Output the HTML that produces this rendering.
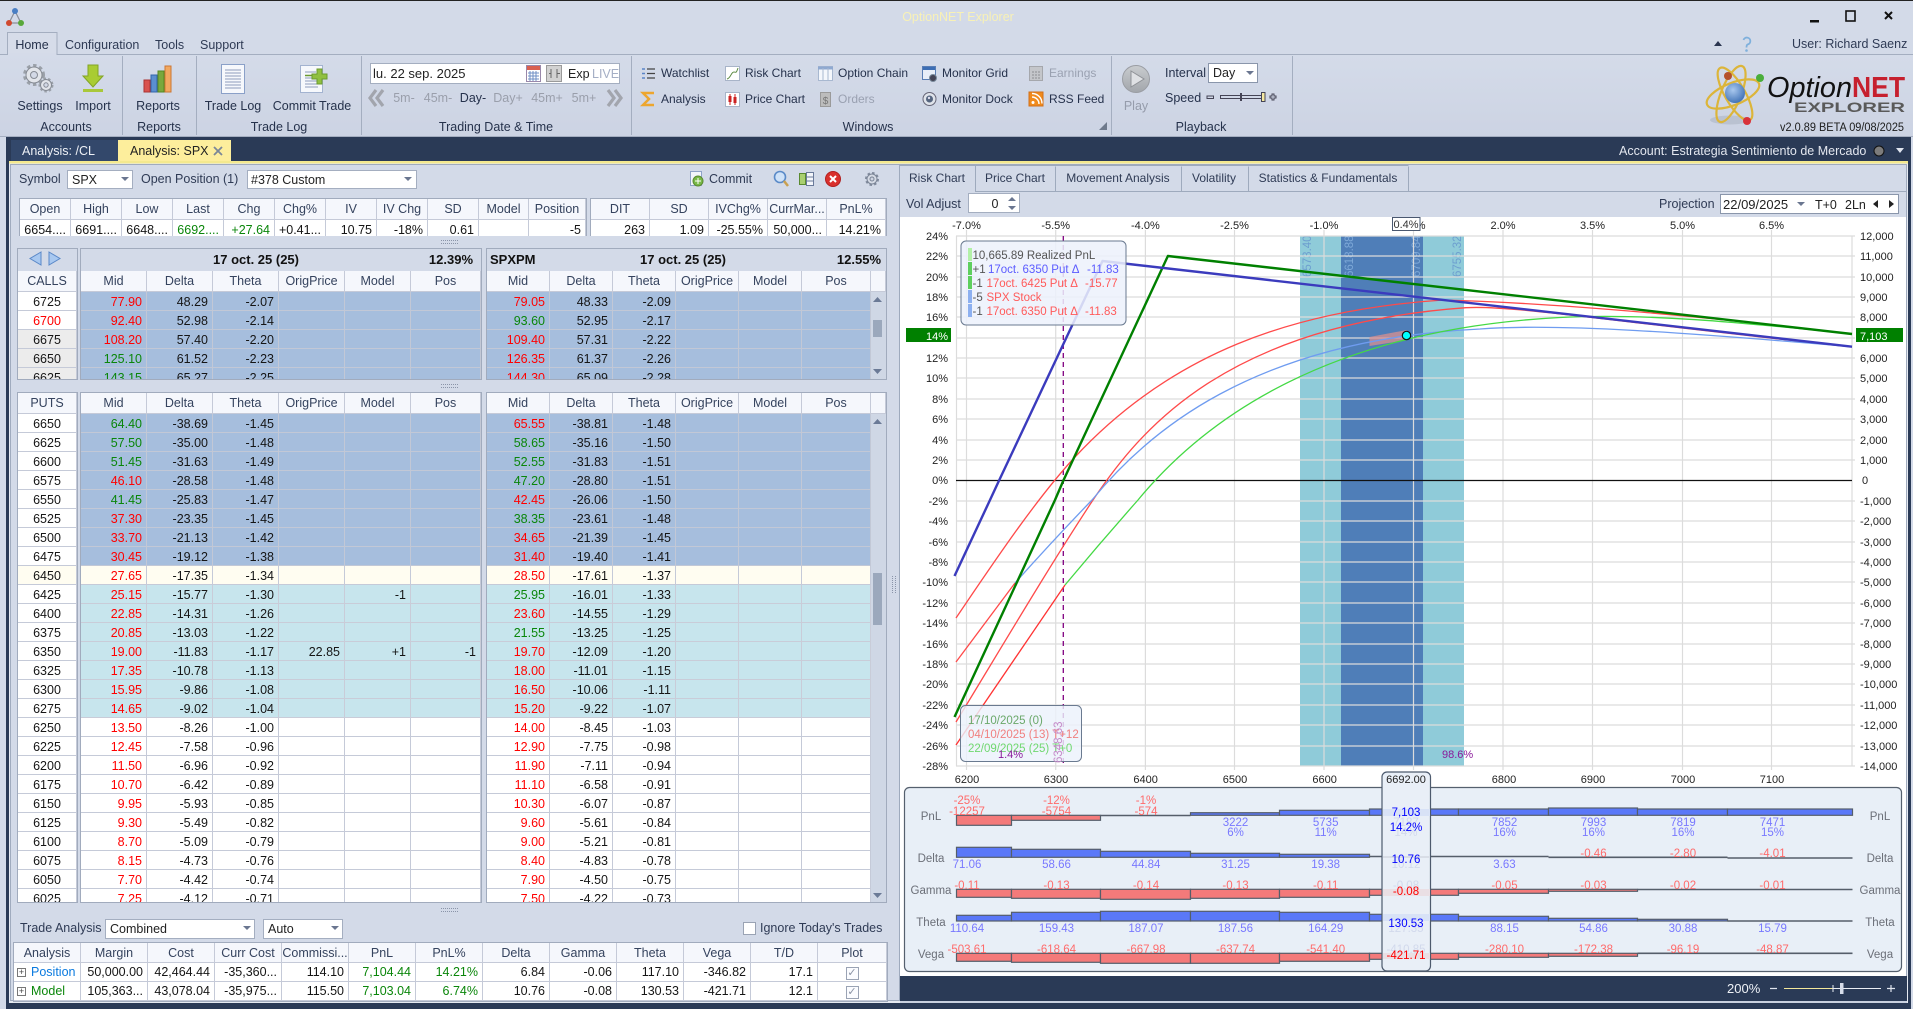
<!DOCTYPE html>
<html><head><meta charset="utf-8"><title>OptionNET Explorer</title>
<style>
html,body{margin:0;padding:0;width:1913px;height:1009px;overflow:hidden;background:#d3dae8}
svg{position:absolute;left:0;top:0;font-family:"Liberation Sans",sans-serif}
.w{position:absolute;overflow:hidden;border:1px solid #a1abbd;box-sizing:border-box}
table{border-collapse:separate;border-spacing:0;table-layout:fixed;font:12.5px "Liberation Sans",sans-serif;color:#151515}
td,th{box-sizing:border-box;height:19px;padding:2px 4px 0 0;border-right:1px solid #c5cad8;border-bottom:1px solid #c5cad8;text-align:right;white-space:nowrap;overflow:hidden;line-height:16px}
th{height:21px;font-weight:normal;background:#f5f7fc;text-align:center;color:#35435e;padding:0;line-height:18px}
.r{color:#f00}.g{color:#0a860a}
.z td{background:#fff}
tr.b td{background:#a6bedd;border-color:#c2c8d6}
tr.y td{background:#fffdf1}
tr.t td{background:#c7e5ed;border-color:#c9ccd8}
tr.e td{background:#ececec}
.s td{text-align:center;padding:2px 0 0}
.i td{height:17px;background:#fff}
.i th{height:21px}
.k td{padding-top:0;line-height:18px}
.k th{height:20px}
.p{display:inline-block;width:7px;height:7px;border:1px solid #777;font-size:9px;line-height:7px;text-align:center;margin:0 5px 0 3px;color:#444;vertical-align:1px}
.c{display:inline-block;width:11px;height:11px;border:1px solid #9aa3b4;font-size:11px;line-height:11px;text-align:center;color:#8a93a5;background:#fbfcff}
</style></head><body>
<svg width="1913" height="1009" viewBox="0 0 1913 1009" font-size="12.5" fill="#26324c">
<defs><linearGradient id="rb" x1="0" y1="0" x2="0" y2="1"><stop offset="0" stop-color="#d4dbe9"/><stop offset="1" stop-color="#ccd3e3"/></linearGradient>
<linearGradient id="pl" x1="0" y1="0" x2="0" y2="1"><stop offset="0" stop-color="#c9cccf"/><stop offset="1" stop-color="#a2a6ab"/></linearGradient>
<radialGradient id="sp" cx=".4" cy=".35" r=".7"><stop offset="0" stop-color="#a9c8ee"/><stop offset="1" stop-color="#3d6fb4"/></radialGradient></defs>
<rect width="1913" height="1009" fill="#d3dae8"/>
<rect width="1913" height="1" fill="#222"/>
<!-- app icon -->
<g><path d="M15 11L9 23H21Z" fill="none" stroke="#8a8f99" stroke-width="1.2"/><circle cx="15" cy="11" r="3" fill="#4a7fc4"/><circle cx="9" cy="23" r="3" fill="#d0492f"/><circle cx="21" cy="23" r="3" fill="#58a83a"/></g>
<text x="958" y="21" text-anchor="middle" font-size="12.5" fill="#f8f1b6">OptionNET Explorer</text>
<rect x="1810" y="20" width="9" height="2.5" fill="#111"/><rect x="1846" y="11" width="9" height="10" fill="none" stroke="#111" stroke-width="1.6"/>
<path d="M1885 12L1892 19M1892 12L1885 19" stroke="#111" stroke-width="2"/>
<!-- ribbon -->
<rect x="0" y="55" width="1913" height="82" fill="url(#rb)"/>
<path d="M0 54.5H1913M0 136.5H1913" stroke="#a4aec0"/>
<path d="M7.5 54.5V32.5H57V54.5" fill="#d6dce9" stroke="#a4aec0"/><rect x="8" y="53" width="48.5" height="3" fill="#d5dbe9"/>
<text x="32" y="49" text-anchor="middle">Home</text><text x="65" y="49" fill="#2f3b55">Configuration</text><text x="155" y="49" fill="#2f3b55">Tools</text><text x="200" y="49" fill="#2f3b55">Support</text>
<path d="M1714 46h8l-4-5z" fill="#2a3550"/>
<path d="M1743.500 40a3.500 3.500 0 1 1 4 4.500c-1 .6-1 1.500-1 3" fill="none" stroke="#7fb0dc" stroke-width="1.800"/><circle cx="1746.500" cy="50.500" r="1.300" fill="#7fb0dc"/>
<text x="1792" y="48" fill="#2f3b55">User: Richard Saenz</text>
<path d="M122.500 56V135M196.500 56V135M361.500 56V135M631.500 56V135M1111.500 56V135M1292.500 56V135" stroke="#a4aec0"/>
<g text-anchor="middle"><text x="40" y="110">Settings</text><text x="93" y="110">Import</text><text x="158" y="110">Reports</text><text x="233" y="110">Trade Log</text><text x="312" y="110">Commit Trade</text>
<text x="66" y="131">Accounts</text><text x="159" y="131">Reports</text><text x="279" y="131">Trade Log</text><text x="496" y="131">Trading Date &amp; Time</text><text x="868" y="131">Windows</text><text x="1201" y="131">Playback</text></g>
<!-- gears -->
<g><circle cx="34" cy="75" r="9" fill="none" stroke="#9aa0a8" stroke-width="4" stroke-dasharray="3.200 2.700"/><circle cx="34" cy="75" r="8" fill="#e2e5ea" stroke="#868b94"/><circle cx="34" cy="75" r="3.500" fill="#d3d9e6" stroke="#868b94"/>
<circle cx="46" cy="85" r="6" fill="none" stroke="#9aa0a8" stroke-width="3" stroke-dasharray="2.300 2"/><circle cx="46" cy="85" r="5.500" fill="#e2e5ea" stroke="#868b94"/><circle cx="46" cy="85" r="2.200" fill="#d3d9e6" stroke="#868b94"/></g>
<path d="M88 65H98V76H103L93 87 83 76H88Z" fill="#a9cc33" stroke="#82a425"/><rect x="83" y="89" width="20" height="3" fill="#a9c83a"/>
<rect x="144" y="80" width="6" height="12" fill="#d9534f" stroke="#a33"/><rect x="151" y="75" width="6" height="17" fill="#5b8fd0" stroke="#36a"/><rect x="158" y="71" width="6" height="21" fill="#7aa83c" stroke="#582"/><rect x="165" y="66" width="6" height="26" fill="#f2a860" stroke="#c73"/>
<rect x="221.500" y="64.500" width="23" height="29" fill="#f6f8fc" stroke="#8aa0c8"/><path d="M225 70H241M225 73H241M225 76H241M225 79H241M225 82H241M225 85H241M225 88H241" stroke="#8d9dbd"/>
<rect x="300.500" y="65.500" width="22" height="27" fill="#f6f8fc" stroke="#a3b3d0"/><path d="M305 72H316M305 78H318M305 81H318M305 84H318M305 87H318" stroke="#8d9dbd"/><path d="M305 75.500H314" stroke="#6a9a30" stroke-width="1.500"/>
<path d="M317 69h5v5h5v5h-5v5h-5v-5h-5v-5h5z" fill="#90c040" stroke="#6a9a30"/>
<!-- date -->
<rect x="370.500" y="63.500" width="249" height="20" fill="#fff" stroke="#a4aec0"/>
<text x="373" y="78" fill="#222" font-size="13">lu. 22 sep. 2025</text>
<rect x="526.500" y="65.500" width="14" height="16" fill="#fff" stroke="#98a"/><rect x="527" y="66" width="13" height="4" fill="#d9604f"/><path d="M528 73H539M528 76H539M528 79H539M530 71V81M533 71V81M536 71V81" stroke="#6f8fc4"/>
<rect x="546.500" y="65.500" width="15" height="16" fill="#d2d2d2" stroke="#9a9a9a"/><path d="M551 69V78M557 69V78M549 73.500H551M557 73.500H560" stroke="#666"/>
<text x="568" y="78" fill="#222">Exp</text><text x="592" y="78" fill="#a5afc5">LIVE</text>
<g fill="none" stroke="#a2a5ad" stroke-width="3.200"><path d="M376 90L370 98 376 106M383 90L377 98 383 106M608 90L614 98 608 106M615 90L621 98 615 106"/></g>
<g text-anchor="middle" fill="#9a9fab"><text x="404" y="102">5m-</text><text x="438" y="102">45m-</text><text x="473" y="102" fill="#26324c">Day-</text><text x="508" y="102">Day+</text><text x="547" y="102">45m+</text><text x="584" y="102">5m+</text></g>
<!-- windows group -->
<g font-size="12"><text x="661" y="77">Watchlist</text><text x="661" y="103">Analysis</text><text x="745" y="77">Risk Chart</text><text x="745" y="103">Price Chart</text><text x="838" y="77">Option Chain</text><text x="838" y="103" fill="#9aa1b1">Orders</text><text x="942" y="77">Monitor Grid</text><text x="942" y="103">Monitor Dock</text><text x="1049" y="77" fill="#9aa1b1">Earnings</text><text x="1049" y="103">RSS Feed</text></g>
<path d="M647 69H655M647 73.500H655M647 78H655" stroke="#444" stroke-width="1.200"/><path d="M642 69H645M642 73.500H645M642 78H645" stroke="#5a85c8" stroke-width="1.600"/>
<path d="M654 93H643L649 99 643 105H654" fill="none" stroke="#eda62e" stroke-width="2.500"/>
<rect x="725.500" y="66.500" width="14" height="14" fill="#fff" stroke="#a8b4c8"/><path d="M727 79C731 78 731 72 734 72 736 72 736 74 738 68" fill="none" stroke="#5a8a40"/>
<rect x="725.500" y="92.500" width="14" height="14" fill="#fff" stroke="#a8b4c8"/><path d="M730 94V105M735 94V105" stroke="#c22"/><rect x="728.500" y="96" width="3" height="6" fill="#c22"/><rect x="733.500" y="97" width="3" height="6" fill="#c22"/>
<rect x="818.500" y="66.500" width="14" height="14" fill="#f4f7fc" stroke="#a8b8d0"/><path d="M818 68H833" stroke="#8fa9d0" stroke-width="3"/><path d="M823 68V81M828 68V81" stroke="#a8b8d0"/>
<rect x="820.500" y="92.500" width="10" height="14" fill="#bcbcbc" stroke="#9a9a9a"/><text x="825.500" y="104" font-size="10" text-anchor="middle" fill="#777">$</text>
<rect x="922.500" y="66.500" width="13" height="13" fill="#e8eef8" stroke="#5a7eb4"/><rect x="923" y="67" width="12" height="3" fill="#3d6eb4"/><circle cx="933" cy="78" r="3.500" fill="#445" stroke="#789"/>
<circle cx="929.500" cy="99" r="6.500" fill="#dfe3ea" stroke="#667"/><circle cx="929.500" cy="99" r="3.500" fill="#55657f"/><circle cx="929" cy="98" r="1.200" fill="#dde"/>
<rect x="1029.500" y="66.500" width="13" height="14" fill="#c4c6ca" stroke="#a5a7ac"/><path d="M1032 72H1040M1032 75H1040M1032 78H1040" stroke="#8b8d92" stroke-dasharray="2 1"/>
<rect x="1029" y="92" width="14" height="14" fill="#f08a1c" stroke="#d2701a"/><circle cx="1033" cy="102.500" r="1.500" fill="#fff"/><path d="M1032 97a7 7 0 0 1 7 7M1032 93.500a10 10 0 0 1 10 10" fill="none" stroke="#fff" stroke-width="1.400"/>
<path d="M1107 122v8h-8z" fill="#6f7a8c"/>
<!-- playback -->
<circle cx="1136" cy="79" r="13.500" fill="url(#pl)" stroke="#9a9da3"/><path d="M1131 71L1144 79 1131 87Z" fill="#dfe1e4" stroke="#8f9297"/>
<text x="1136" y="110" text-anchor="middle" fill="#969cab">Play</text>
<text x="1165" y="77">Interval</text><rect x="1208.500" y="63.500" width="49" height="19" fill="#fff" stroke="#8a96ab"/><text x="1213" y="77" fill="#222">Day</text><path d="M1246 71h8l-4 4z" fill="#6a7690"/>
<text x="1165" y="102">Speed</text>
<rect x="1207" y="96" width="6.500" height="2.500" fill="none" stroke="#445"/><rect x="1220.500" y="95.500" width="43" height="3" fill="none" stroke="#445"/><path d="M1241 93V101" stroke="#445" stroke-width="2"/><rect x="1261.500" y="92.500" width="3.500" height="9" fill="#f4e8a0" stroke="#445"/>
<path d="M1272 94h2v2h2v2h-2v2h-2v-2h-2v-2h2z" fill="none" stroke="#445"/>
<!-- logo -->
<ellipse cx="1730" cy="120" rx="20" ry="4.500" fill="#aeb5c4" opacity=".6"/>
<g fill="none" stroke="#dcb53a" stroke-width="2.200"><ellipse cx="1733" cy="94" rx="28" ry="11" transform="rotate(-22 1733 94)"/><ellipse cx="1735" cy="94" rx="30" ry="10" transform="rotate(60 1735 94)"/><ellipse cx="1731" cy="94" rx="30" ry="10" transform="rotate(112 1731 94)"/></g>
<circle cx="1735" cy="93" r="10" fill="url(#sp)"/><circle cx="1728" cy="76" r="4" fill="#b5502a"/><circle cx="1760" cy="78" r="4" fill="#4aae3a"/><circle cx="1747" cy="121" r="4" fill="#d8323a"/>
<text x="1767" y="97" font-size="29" font-style="italic" fill="#111" textLength="85" lengthAdjust="spacingAndGlyphs">Option</text>
<text x="1852" y="97" font-size="29" font-weight="bold" fill="#c6202e" textLength="53" lengthAdjust="spacingAndGlyphs">NET</text>
<text x="1794" y="112" font-size="14" font-weight="bold" fill="#5a5a5a" textLength="111" lengthAdjust="spacingAndGlyphs">EXPLORER</text>
<text x="1780" y="131" font-size="11.500" fill="#1c1c1c" textLength="124" lengthAdjust="spacingAndGlyphs">v2.0.89 BETA 09/08/2025</text>
<!-- navy + doc tabs -->
<rect x="6" y="137" width="1905" height="872" fill="#2a3a56"/>
<rect x="11" y="140" width="107" height="21" fill="#33486b"/><rect x="118" y="140" width="113" height="21" fill="#fdee9c"/>
<text x="22" y="155" fill="#eef1f6">Analysis: /CL</text><text x="130" y="155" fill="#222">Analysis: SPX</text>
<path d="M214 147L222 155M222 147L214 155" stroke="#7b8798" stroke-width="1.800"/>
<text x="1619" y="155" fill="#e3e7ef">Account: Estrategia Sentimiento de Mercado</text>
<circle cx="1879" cy="151" r="5" fill="#7c7c7c" stroke="#111"/><path d="M1896 148h8l-4 5z" fill="#dfe4ee"/>
<rect x="9" y="161" width="1899" height="2.500" fill="#f4e98e"/>
<rect x="9" y="163.500" width="1899" height="839.500" fill="#e6eaf2"/>
<rect x="10.500" y="164.500" width="1896" height="836" fill="#d3dae8" stroke="#a0abbe"/>
<!-- left toolbar -->
<text x="19" y="183" fill="#2f3b55">Symbol</text>
<rect x="67.500" y="170.500" width="65" height="18" fill="#fff" stroke="#a4aec0"/><text x="72" y="184" fill="#222">SPX</text><path d="M121 177h8l-4 4z" fill="#6a7690"/>
<text x="141" y="183" fill="#2f3b55">Open Position (1)</text>
<rect x="247.500" y="170.500" width="169" height="18" fill="#fff" stroke="#a4aec0"/><text x="251" y="184" fill="#222">#378 Custom</text><path d="M404 177h8l-4 4z" fill="#6a7690"/>
<rect x="690.500" y="171.500" width="11" height="14" fill="#f2f5fb" stroke="#8fa3c8"/><circle cx="698" cy="181" r="5" fill="#78b948" stroke="#5a8a30"/><path d="M695 181H701M698 178V184" stroke="#fff"/>
<text x="709" y="183" fill="#2f3b55">Commit</text>
<circle cx="780" cy="177" r="5.500" fill="#cfe2f8" stroke="#5a8ac8" stroke-width="1.600"/><path d="M784 181L788 186" stroke="#c9a050" stroke-width="2.500"/>
<rect x="799.500" y="173.500" width="6" height="11" fill="#a9cf70" stroke="#5a8a30"/><rect x="806.500" y="172.500" width="7" height="13" fill="#f4f6fb" stroke="#6a7a9a"/><path d="M807 177H813M807 181H813" stroke="#6a7a9a"/>
<circle cx="833" cy="179" r="7.500" fill="#d9302c" stroke="#b02020"/><path d="M830 176L836 182M836 176L830 182" stroke="#fff" stroke-width="2"/>
<circle cx="872" cy="179" r="5.500" fill="none" stroke="#808a9c" stroke-width="3" stroke-dasharray="2.300 2"/><circle cx="872" cy="179" r="5" fill="#d6dbe5" stroke="#7a8496"/><circle cx="872" cy="179" r="2" fill="#cfd5e2" stroke="#7a8496"/>
<path d="M441 240.500H458M441 243.500H458M441 384.500H458M441 387.500H458M441 908.500H458M441 911.500H458" stroke="#8a94a8" stroke-dasharray="1 1"/>
<path d="M892.500 576V594M895.500 576V594" stroke="#8a94a8" stroke-dasharray="1 1"/>
<!-- calls titles -->
<path d="M41 252L30 258.500 41 265Z" fill="#a8c8f0" stroke="#5a88c8"/><path d="M49 252L60 258.500 49 265Z" fill="#a8c8f0" stroke="#5a88c8"/>
<g font-weight="bold" font-size="13" fill="#111"><text x="256" y="264" text-anchor="middle">17 oct. 25 (25)</text><text x="473" y="264" text-anchor="end">12.39%</text><text x="490" y="264">SPXPM</text><text x="683" y="264" text-anchor="middle">17 oct. 25 (25)</text><text x="881" y="264" text-anchor="end">12.55%</text></g>
<!-- scrollbars -->
<rect x="870" y="292" width="16" height="88" fill="#cfd7e5"/><rect x="870" y="414" width="16" height="489" fill="#cfd7e5"/>
<path d="M873 302h9l-4.500-5zM873 369h9l-4.500 5zM873 424h9l-4.500-5zM873 893h9l-4.500 5z" fill="#6b7a96"/>
<rect x="873" y="320" width="9" height="17" fill="#9ba8bc"/><rect x="873" y="573" width="9" height="52" fill="#9ba8bc"/>
<!-- trade analysis bar -->
<text x="20" y="932" fill="#2f3b55">Trade Analysis</text>
<rect x="105.500" y="919.500" width="149" height="19" fill="#fff" stroke="#a4aec0"/><text x="110" y="933" fill="#222">Combined</text><path d="M243 926h8l-4 4z" fill="#6a7690"/>
<rect x="263.500" y="919.500" width="79" height="19" fill="#fff" stroke="#a4aec0"/><text x="268" y="933" fill="#222">Auto</text><path d="M331 926h8l-4 4z" fill="#6a7690"/>
<rect x="743.500" y="922.500" width="12" height="12" fill="#fff" stroke="#9aa3b4"/><text x="760" y="932" fill="#2f3b55">Ignore Today's Trades</text>
<!-- right pane tabs -->
<path d="M899.500 1000V165.500H975.500V191.500H1906.500" fill="#d3dae8" stroke="#9eaabd"/>
<path d="M975.500 191V166M1055.500 191V166.500M1181.500 191V166.500M1248.500 191V166.500M1408.500 191V166.500M975 165.500H1408.500" stroke="#9eaabd" fill="none"/>
<g text-anchor="middle" fill="#2f3b55" font-size="12"><text x="937" y="182">Risk Chart</text><text x="1015" y="182">Price Chart</text><text x="1118" y="182">Movement Analysis</text><text x="1214" y="182">Volatility</text><text x="1328" y="182">Statistics &amp; Fundamentals</text></g>
<text x="906" y="208" fill="#2f3b55">Vol Adjust</text>
<rect x="968.500" y="193.500" width="51" height="19" fill="#fff" stroke="#a4aec0"/><text x="995" y="208" text-anchor="middle" fill="#222">0</text><path d="M1008 201h8l-4-4zM1008 206h8l-4 4z" fill="#6a7690"/>
<text x="1659" y="208" fill="#2f3b55">Projection</text>
<rect x="1720.500" y="194.500" width="178" height="19" fill="#fff" stroke="#8a96ab"/><text x="1723" y="209" fill="#222" font-size="13">22/09/2025</text><path d="M1797 202h8l-4 4z" fill="#6a7690"/><text x="1815" y="209" fill="#222">T+0</text><text x="1845" y="209" fill="#222">2Ln</text><path d="M1878 200v8l-5-4zM1889 200v8l5-4z" fill="#222"/>
<!-- chart -->
<rect x="900" y="217" width="1006" height="759" fill="#fff"/>
<rect x="1300" y="236" width="164" height="530" fill="#8fcbd9"/><rect x="1341" y="236" width="82" height="530" fill="#4f7eb8"/>
<g font-size="11.500"><text transform="translate(1311,277) rotate(-90)" fill="#6d9fcf">6573.40</text><text transform="translate(1353,277) rotate(-90)" fill="#7ea9d8">6618.88</text><text transform="translate(1420,277) rotate(-90)" fill="#7ea9d8">6709.84</text><text transform="translate(1461,277) rotate(-90)" fill="#6d9fcf">6755.32</text></g>
<path d="M956 236H1855M956 256H1855M956 277H1855M956 297H1855M956 317H1855M956 338H1855M956 358H1855M956 378H1855M956 399H1855M956 419H1855M956 440H1855M956 460H1855M956 501H1855M956 521H1855M956 542H1855M956 562H1855M956 582H1855M956 603H1855M956 623H1855M956 644H1855M956 664H1855M956 684H1855M956 705H1855M956 725H1855M956 746H1855M956 766H1855" stroke="#dcdcdc" stroke-width="1.200" fill="none"/>
<path d="M966.500 230V770M1055.700 230V770M1145.400 230V770M1234.500 230V770M1324 230V770M1413.500 230V770M1503 230V770M1592.500 230V770M1682.500 230V770M1771.500 230V770M956.500 236V766M1852 236V766" stroke="#dcdcdc" stroke-width="1.200" fill="none"/>
<path d="M956 480.500H1852" stroke="#111" stroke-width="1.200"/>
<path d="M1063.300 236V766" stroke="#800080" stroke-width="1.300" stroke-dasharray="5 4"/>
<path d="M1369.500 337L1407 330V340L1369.500 346Z" fill="#d89090" opacity=".75"/>
<g fill="none" stroke-width="1.300" stroke-linejoin="round">
<path d="M956 618C990 568 1035 500 1075 457C1170 355 1290 310 1443 300C1560 303 1720 318 1852 334" stroke="#ff4a4a"/>
<path d="M956 722C1000 650 1050 565 1093 500C1140 430 1225 325 1466 307.700C1510 305 1600 320 1852 347" stroke="#ff4a4a"/>
<path d="M956 662L1015 583" stroke="#ff4a4a"/>
<path d="M1015 583C1040 555 1065 528 1092 500C1145 435 1250 340 1480 329C1560 323 1690 333 1852 346.700" stroke="#6f9cf0"/>
<path d="M956 745L1065 585" stroke="#f33"/>
<path d="M1065 585C1090 555 1115 526 1138 500C1200 425 1320 330 1560 317.500C1640 313 1740 322 1852 334" stroke="#44d944"/>
</g>
<path d="M954.500 717L1055 500 1063.600 480 1167.900 256 1852 334" fill="none" stroke="#008000" stroke-width="2.400" stroke-linejoin="round"/>
<path d="M954.500 576L990 500 999.300 480 1102.500 261 1852 346.700" fill="none" stroke="#3b3bbd" stroke-width="2.400" stroke-linejoin="round"/>
<circle cx="1406.500" cy="335.500" r="4.200" fill="#00ffff" stroke="#111" stroke-width="1.200"/>
<!-- axis labels -->
<g font-size="11" text-anchor="middle" fill="#222"><text x="966.500" y="229">-7.0%</text><text x="1055.700" y="229">-5.5%</text><text x="1145.400" y="229">-4.0%</text><text x="1234.500" y="229">-2.5%</text><text x="1324" y="229">-1.0%</text><text x="1413" y="229">0.5%</text><text x="1503" y="229">2.0%</text><text x="1592.500" y="229">3.5%</text><text x="1682.500" y="229">5.0%</text><text x="1771.500" y="229">6.5%</text></g>
<rect x="1392.500" y="217.500" width="27.500" height="13" fill="#fff" stroke="#4a5870"/><text x="1406" y="228" font-size="11" text-anchor="middle" fill="#333">0.4%</text>
<g font-size="11" text-anchor="end" fill="#222"><text x="948" y="240">24%</text><text x="948" y="260">22%</text><text x="948" y="281">20%</text><text x="948" y="301">18%</text><text x="948" y="321">16%</text><text x="948" y="362">12%</text><text x="948" y="382">10%</text><text x="948" y="403">8%</text><text x="948" y="423">6%</text><text x="948" y="444">4%</text><text x="948" y="464">2%</text><text x="948" y="484">0%</text><text x="948" y="505">-2%</text><text x="948" y="525">-4%</text><text x="948" y="546">-6%</text><text x="948" y="566">-8%</text><text x="948" y="586">-10%</text><text x="948" y="607">-12%</text><text x="948" y="627">-14%</text><text x="948" y="648">-16%</text><text x="948" y="668">-18%</text><text x="948" y="688">-20%</text><text x="948" y="709">-22%</text><text x="948" y="729">-24%</text><text x="948" y="750">-26%</text><text x="948" y="770">-28%</text></g>
<rect x="906" y="328" width="45" height="14" fill="#008000"/><text x="948" y="340" font-size="11" text-anchor="end" fill="#fff">14%</text>
<g font-size="11" fill="#222"><text x="1860" y="240">12,000</text><text x="1860" y="260">11,000</text><text x="1860" y="281">10,000</text><text x="1860" y="301">9,000</text><text x="1860" y="321">8,000</text><text x="1860" y="362">6,000</text><text x="1860" y="382">5,000</text><text x="1860" y="403">4,000</text><text x="1860" y="423">3,000</text><text x="1860" y="444">2,000</text><text x="1860" y="464">1,000</text><text x="1862" y="484">0</text><text x="1860" y="505">-1,000</text><text x="1860" y="525">-2,000</text><text x="1860" y="546">-3,000</text><text x="1860" y="566">-4,000</text><text x="1860" y="586">-5,000</text><text x="1860" y="607">-6,000</text><text x="1860" y="627">-7,000</text><text x="1860" y="648">-8,000</text><text x="1860" y="668">-9,000</text><text x="1860" y="688">-10,000</text><text x="1860" y="709">-11,000</text><text x="1860" y="729">-12,000</text><text x="1860" y="750">-13,000</text><text x="1860" y="770">-14,000</text></g>
<rect x="1856" y="328" width="47" height="14" fill="#008000"/><text x="1860" y="340" font-size="11" fill="#fff">7,103</text>
<g font-size="11" text-anchor="middle" fill="#222"><text x="967" y="783">6200</text><text x="1056" y="783">6300</text><text x="1145.600" y="783">6400</text><text x="1235" y="783">6500</text><text x="1324.600" y="783">6600</text><text x="1504" y="783">6800</text><text x="1593" y="783">6900</text><text x="1683" y="783">7000</text><text x="1772" y="783">7100</text></g>
<!-- tooltips -->
<rect x="961" y="241" width="165" height="84" rx="5" fill="#ecf1fb" fill-opacity=".86" stroke="#6a7a90"/>
<rect x="968" y="248" width="4" height="13" fill="#b3f0a8"/><rect x="968" y="262" width="4" height="13" fill="#5ecf5e"/><rect x="968" y="276" width="4" height="13" fill="#5ecf5e"/><rect x="968" y="290" width="4" height="13" fill="#8db0f0"/><rect x="968" y="304" width="4" height="13" fill="#8db0f0"/>
<g font-size="11.500" fill="#555"><text x="972.500" y="259">10,665.89 Realized PnL</text><text x="972.500" y="273">+1</text><text x="988" y="273" fill="#5b5bff">17oct. 6350 Put Δ</text><text x="1087" y="273" fill="#5b5bff">-11.83</text><text x="972.500" y="287">-1</text><text x="986.500" y="287" fill="#ff5a5a">17oct. 6425 Put Δ</text><text x="1085" y="287" fill="#ff5a5a">-15.77</text><text x="972.500" y="301">-5</text><text x="986.500" y="301" fill="#ff5a5a">SPX Stock</text><text x="972.500" y="315">-1</text><text x="986.500" y="315" fill="#ff5a5a">17oct. 6350 Put Δ</text><text x="1085" y="315" fill="#ff5a5a">-11.83</text></g>
<rect x="960.500" y="705.500" width="121" height="56" rx="5" fill="#ecf1fb" fill-opacity=".82" stroke="#6a7a90"/>
<g font-size="11.500"><text x="968" y="724" fill="#6aa86a">17/10/2025 (0)</text><text x="968" y="738" fill="#f08080">04/10/2025 (13) T+12</text><text x="968" y="752" fill="#70d870">22/09/2025 (25) T+0</text></g>
<text transform="translate(1062,763) rotate(-90)" font-size="11.500" fill="#c58ac9">6348.63</text>
<text x="998" y="758" font-size="11" fill="#8a1a9a">1.4%</text><text x="1442" y="758" font-size="11" fill="#8a1a9a">98.6%</text>
<!-- bottom panel -->
<rect x="904.500" y="787.500" width="997" height="184" rx="5" fill="#e8eff7" stroke="#55606e" stroke-width="1.200"/>
<g font-size="11.500" text-anchor="middle" fill="#6b6f78"><text x="931" y="820">PnL</text><text x="931" y="862">Delta</text><text x="931" y="894">Gamma</text><text x="931" y="926">Theta</text><text x="931" y="958">Vega</text><text x="1880" y="820">PnL</text><text x="1880" y="862">Delta</text><text x="1880" y="894">Gamma</text><text x="1880" y="926">Theta</text><text x="1880" y="958">Vega</text></g>
<g stroke="#555e6a" stroke-width="1.200" fill="#f47a7a">
<rect x="956.500" y="815.300" width="55" height="10"/><rect x="1011.500" y="815.300" width="89" height="5"/>
<rect x="956.500" y="889.300" width="55" height="8"/><rect x="1011.500" y="889.300" width="89" height="9"/><rect x="1100.500" y="889.300" width="90" height="10"/><rect x="1190.500" y="889.300" width="89" height="9"/><rect x="1279.500" y="889.300" width="90" height="8"/><rect x="1369.500" y="889.300" width="89" height="6"/><rect x="1458.500" y="889.300" width="90" height="4"/><rect x="1548.500" y="889.300" width="89" height="2"/>
<rect x="956.500" y="953.300" width="55" height="8"/><rect x="1011.500" y="953.300" width="89" height="9"/><rect x="1100.500" y="953.300" width="90" height="10"/><rect x="1190.500" y="953.300" width="89" height="10"/><rect x="1279.500" y="953.300" width="90" height="8"/><rect x="1369.500" y="953.300" width="89" height="6"/><rect x="1458.500" y="953.300" width="90" height="4"/><rect x="1548.500" y="953.300" width="89" height="3"/>
</g>
<g stroke="#555e6a" stroke-width="1.200" fill="#5a78f8">
<rect x="1190.500" y="812.700" width="89" height="2.600"/><rect x="1279.500" y="810.300" width="90" height="5"/><rect x="1369.500" y="809" width="89" height="6.300"/><rect x="1458.500" y="809" width="90" height="6.300"/><rect x="1548.500" y="808" width="89" height="7.300"/><rect x="1637.500" y="809" width="90" height="6.300"/><rect x="1727.500" y="809" width="125" height="6.300"/>
<rect x="956.500" y="847.300" width="55" height="10"/><rect x="1011.500" y="849.300" width="89" height="8"/><rect x="1100.500" y="851.300" width="90" height="6"/><rect x="1190.500" y="853.300" width="89" height="4"/><rect x="1279.500" y="854.300" width="90" height="3"/>
<rect x="956.500" y="915.300" width="55" height="5.700"/><rect x="1011.500" y="912.300" width="89" height="8.700"/><rect x="1100.500" y="911.300" width="90" height="9.700"/><rect x="1190.500" y="911.300" width="89" height="9.700"/><rect x="1279.500" y="912.300" width="90" height="8.700"/><rect x="1369.500" y="914.300" width="89" height="6.700"/><rect x="1458.500" y="916.300" width="90" height="4.700"/><rect x="1548.500" y="918.300" width="89" height="2.700"/><rect x="1637.500" y="919.300" width="90" height="1.700"/>
</g>
<path d="M1100.500 815.500H1190.500M1369.500 856.500H1548.500M1548.500 857.300H1727.500M1727.500 858H1852.500M1637.500 889.500H1852.500M1727.500 921H1852.500M1637.500 953.300H1852.500" stroke="#555e6a" stroke-width="1.600" fill="none"/>
<g font-size="11.500" text-anchor="middle" fill="#ff6a6a"><text x="967" y="804">-25%</text><text x="967" y="815">-12257</text><text x="1056.500" y="804">-12%</text><text x="1056.500" y="815">-5754</text><text x="1146" y="804">-1%</text><text x="1146" y="815">-574</text>
<text x="1593.500" y="857">-0.46</text><text x="1683" y="857">-2.80</text><text x="1772.500" y="857">-4.01</text>
<text x="967" y="889">-0.11</text><text x="1056.500" y="889">-0.13</text><text x="1146" y="889">-0.14</text><text x="1235.500" y="889">-0.13</text><text x="1325.700" y="889">-0.11</text><text x="1504.500" y="889">-0.05</text><text x="1593.500" y="889">-0.03</text><text x="1683" y="889">-0.02</text><text x="1772.500" y="889">-0.01</text>
<text x="967" y="953">-503.61</text><text x="1056.500" y="953">-618.64</text><text x="1146" y="953">-667.98</text><text x="1235.500" y="953">-637.74</text><text x="1325.700" y="953">-541.40</text><text x="1504.500" y="953">-280.10</text><text x="1593.500" y="953">-172.38</text><text x="1683" y="953">-96.19</text><text x="1772.500" y="953">-48.87</text></g>
<g font-size="11.500" text-anchor="middle" fill="#7878ff"><text x="1235.500" y="826">3222</text><text x="1235.500" y="836">6%</text><text x="1325.700" y="826">5735</text><text x="1325.700" y="836">11%</text><text x="1504.500" y="826">7852</text><text x="1504.500" y="836">16%</text><text x="1593.500" y="826">7993</text><text x="1593.500" y="836">16%</text><text x="1683" y="826">7819</text><text x="1683" y="836">16%</text><text x="1772.500" y="826">7471</text><text x="1772.500" y="836">15%</text>
<text x="967" y="868">71.06</text><text x="1056.500" y="868">58.66</text><text x="1146" y="868">44.84</text><text x="1235.500" y="868">31.25</text><text x="1325.700" y="868">19.38</text><text x="1504.500" y="868">3.63</text>
<text x="967" y="932">110.64</text><text x="1056.500" y="932">159.43</text><text x="1146" y="932">187.07</text><text x="1235.500" y="932">187.56</text><text x="1325.700" y="932">164.29</text><text x="1504.500" y="932">88.15</text><text x="1593.500" y="932">54.86</text><text x="1683" y="932">30.88</text><text x="1772.500" y="932">15.79</text></g>
<!-- center box -->
<rect x="1382" y="772" width="48.500" height="199" rx="5" fill="#e9eff7" stroke="#4d5a6d" stroke-width="1.200"/>
<rect x="1383" y="809" width="47" height="7" fill="#d8e2f6"/><rect x="1383" y="856" width="47" height="2" fill="#d8dde6"/><rect x="1383" y="889" width="47" height="7" fill="#eadfe4"/><rect x="1383" y="914" width="47" height="7" fill="#d8e2f6"/><rect x="1383" y="953" width="47" height="6" fill="#eadfe4"/>
<g font-size="11.500" text-anchor="middle" fill="#d2d9ec"><text x="1406" y="826">7187</text><text x="1406" y="836">14%</text><text x="1406" y="868">10.12</text><text x="1406" y="889">-0.08</text><text x="1406" y="932">127.35</text><text x="1406" y="953">-410.85</text></g>
<text x="1406" y="783" font-size="11" text-anchor="middle" fill="#222">6692.00</text>
<g font-size="11.500" text-anchor="middle" fill="#0000ff"><text x="1406" y="816">7,103</text><text x="1406" y="831">14.2%</text><text x="1406" y="863">10.76</text><text x="1406" y="895" fill="#ff0000">-0.08</text><text x="1406" y="927">130.53</text><text x="1406" y="959" fill="#ff0000">-421.71</text></g>
<!-- status -->
<rect x="900" y="976" width="1007" height="25" fill="#2a3a56"/>
<rect x="900" y="1001" width="1007" height="2" fill="#c9d1e0"/>
<text x="1727" y="993" font-size="13" fill="#eef1f6">200%</text>
<path d="M1770 988.500H1777M1887 988.500H1895M1891 985V992" stroke="#dfe4ee" stroke-width="1.200"/>
<path d="M1784 988.500H1833" stroke="#f3e79a"/><path d="M1833 988.500H1881M1833 985V992" stroke="#e9edf4"/><rect x="1840" y="983" width="3.500" height="11" fill="#d6dce9"/>
</svg>

<div class="w" style="left:19px;top:198px;width:568px;height:38px;border-bottom:0"><table class="i" style="width:566px"><colgroup><col style="width:51px"><col style="width:51px"><col style="width:51px"><col style="width:51px"><col style="width:51px"><col style="width:51px"><col style="width:51px"><col style="width:51px"><col style="width:51px"><col style="width:50px"><col style="width:57px"></colgroup>
<tr><th>Open<th>High<th>Low<th>Last<th>Chg<th>Chg%<th>IV<th>IV Chg<th>SD<th>Model<th>Position
<tr><td>6654....<td>6691....<td>6648....<td class="g">6692....<td class="g">+27.64<td>+0.41...<td>10.75<td>-18%<td>0.61<td><td>-5</table></div>
<div class="w" style="left:590px;top:198px;width:297px;height:38px;border-bottom:0"><table class="i" style="width:295px"><colgroup><col style="width:59px"><col style="width:59px"><col style="width:59px"><col style="width:59px"><col style="width:59px"></colgroup>
<tr><th>DIT<th>SD<th>IVChg%<th>CurrMar...<th>PnL%
<tr><td>263<td>1.09<td>-25.55%<td>50,000...<td>14.21%</table></div>

<div class="w" style="left:17px;top:248px;width:61px;height:132px"><table class="s z" style="width:59px;margin-top:22px"><colgroup><col style="width:59px"></colgroup>
<tr><th>CALLS<tr><td>6725<tr><td class="r">6700<tr class="e"><td>6675<tr class="e"><td>6650<tr class="e"><td>6625</table></div>
<div class="w" style="left:80px;top:248px;width:402px;height:132px"><table style="width:400px;margin-top:22px"><colgroup><col style="width:66px"><col style="width:66px"><col style="width:66px"><col style="width:66px"><col style="width:66px"><col style="width:70px"></colgroup>
<tr><th>Mid<th>Delta<th>Theta<th>OrigPrice<th>Model<th>Pos
<tr class="b"><td class="r">77.90<td>48.29<td>-2.07<td><td><td>
<tr class="b"><td class="r">92.40<td>52.98<td>-2.14<td><td><td>
<tr class="b"><td class="r">108.20<td>57.40<td>-2.20<td><td><td>
<tr class="b"><td class="g">125.10<td>61.52<td>-2.23<td><td><td>
<tr class="b"><td class="g">143.15<td>65.27<td>-2.25<td><td><td></table></div>
<div class="w" style="left:486px;top:248px;width:401px;height:132px"><table style="width:399px;margin-top:22px"><colgroup><col style="width:63px"><col style="width:63px"><col style="width:63px"><col style="width:63px"><col style="width:63px"><col style="width:69px"><col style="width:15px"></colgroup>
<tr><th>Mid<th>Delta<th>Theta<th>OrigPrice<th>Model<th>Pos<th>
<tr class="b"><td class="r">79.05<td>48.33<td>-2.09<td><td><td>
<tr class="b"><td class="g">93.60<td>52.95<td>-2.17<td><td><td>
<tr class="b"><td class="r">109.40<td>57.31<td>-2.22<td><td><td>
<tr class="b"><td class="r">126.35<td>61.37<td>-2.26<td><td><td>
<tr class="b"><td class="r">144.30<td>65.09<td>-2.28<td><td><td></table></div>

<div class="w" style="left:17px;top:392px;width:61px;height:511px"><table class="s z" style="width:59px"><colgroup><col style="width:59px"></colgroup>
<tr><th>PUTS<tr><td>6650<tr><td>6625<tr><td>6600<tr><td>6575<tr><td>6550<tr><td>6525<tr><td>6500<tr><td>6475<tr class="y"><td>6450<tr><td>6425<tr><td>6400<tr><td>6375<tr><td>6350<tr><td>6325<tr><td>6300<tr><td>6275<tr><td>6250<tr><td>6225<tr><td>6200<tr><td>6175<tr><td>6150<tr><td>6125<tr><td>6100<tr><td>6075<tr><td>6050<tr><td>6025</table></div>

<div class="w" style="left:80px;top:392px;width:402px;height:511px"><table class="z" style="width:400px"><colgroup><col style="width:66px"><col style="width:66px"><col style="width:66px"><col style="width:66px"><col style="width:66px"><col style="width:70px"></colgroup>
<tr><th>Mid<th>Delta<th>Theta<th>OrigPrice<th>Model<th>Pos
<tr class="b"><td class="g">64.40<td>-38.69<td>-1.45<td><td><td>
<tr class="b"><td class="g">57.50<td>-35.00<td>-1.48<td><td><td>
<tr class="b"><td class="g">51.45<td>-31.63<td>-1.49<td><td><td>
<tr class="b"><td class="r">46.10<td>-28.58<td>-1.48<td><td><td>
<tr class="b"><td class="g">41.45<td>-25.83<td>-1.47<td><td><td>
<tr class="b"><td class="r">37.30<td>-23.35<td>-1.45<td><td><td>
<tr class="b"><td class="r">33.70<td>-21.13<td>-1.42<td><td><td>
<tr class="b"><td class="r">30.45<td>-19.12<td>-1.38<td><td><td>
<tr class="y"><td class="r">27.65<td>-17.35<td>-1.34<td><td><td>
<tr class="t"><td class="r">25.15<td>-15.77<td>-1.30<td><td>-1<td>
<tr class="t"><td class="r">22.85<td>-14.31<td>-1.26<td><td><td>
<tr class="t"><td class="r">20.85<td>-13.03<td>-1.22<td><td><td>
<tr class="t"><td class="r">19.00<td>-11.83<td>-1.17<td>22.85<td>+1<td>-1
<tr class="t"><td class="r">17.35<td>-10.78<td>-1.13<td><td><td>
<tr class="t"><td class="r">15.95<td>-9.86<td>-1.08<td><td><td>
<tr class="t"><td class="r">14.65<td>-9.02<td>-1.04<td><td><td>
<tr><td class="r">13.50<td>-8.26<td>-1.00<td><td><td>
<tr><td class="r">12.45<td>-7.58<td>-0.96<td><td><td>
<tr><td class="r">11.50<td>-6.96<td>-0.92<td><td><td>
<tr><td class="r">10.70<td>-6.42<td>-0.89<td><td><td>
<tr><td class="r">9.95<td>-5.93<td>-0.85<td><td><td>
<tr><td class="r">9.30<td>-5.49<td>-0.82<td><td><td>
<tr><td class="r">8.70<td>-5.09<td>-0.79<td><td><td>
<tr><td class="r">8.15<td>-4.73<td>-0.76<td><td><td>
<tr><td class="r">7.70<td>-4.42<td>-0.74<td><td><td>
<tr><td class="r">7.25<td>-4.12<td>-0.71<td><td><td></table></div>

<div class="w" style="left:486px;top:392px;width:401px;height:511px"><table class="z" style="width:399px"><colgroup><col style="width:63px"><col style="width:63px"><col style="width:63px"><col style="width:63px"><col style="width:63px"><col style="width:69px"><col style="width:15px"></colgroup>
<tr><th>Mid<th>Delta<th>Theta<th>OrigPrice<th>Model<th>Pos<th>
<tr class="b"><td class="r">65.55<td>-38.81<td>-1.48<td><td><td>
<tr class="b"><td class="g">58.65<td>-35.16<td>-1.50<td><td><td>
<tr class="b"><td class="g">52.55<td>-31.83<td>-1.51<td><td><td>
<tr class="b"><td class="g">47.20<td>-28.80<td>-1.51<td><td><td>
<tr class="b"><td class="r">42.45<td>-26.06<td>-1.50<td><td><td>
<tr class="b"><td class="g">38.35<td>-23.61<td>-1.48<td><td><td>
<tr class="b"><td class="r">34.65<td>-21.39<td>-1.45<td><td><td>
<tr class="b"><td class="r">31.40<td>-19.40<td>-1.41<td><td><td>
<tr class="y"><td class="r">28.50<td>-17.61<td>-1.37<td><td><td>
<tr class="t"><td class="g">25.95<td>-16.01<td>-1.33<td><td><td>
<tr class="t"><td class="r">23.60<td>-14.55<td>-1.29<td><td><td>
<tr class="t"><td class="g">21.55<td>-13.25<td>-1.25<td><td><td>
<tr class="t"><td class="r">19.70<td>-12.09<td>-1.20<td><td><td>
<tr class="t"><td class="r">18.00<td>-11.01<td>-1.15<td><td><td>
<tr class="t"><td class="r">16.50<td>-10.06<td>-1.11<td><td><td>
<tr class="t"><td class="r">15.20<td>-9.22<td>-1.07<td><td><td>
<tr><td class="r">14.00<td>-8.45<td>-1.03<td><td><td>
<tr><td class="r">12.90<td>-7.75<td>-0.98<td><td><td>
<tr><td class="r">11.90<td>-7.11<td>-0.94<td><td><td>
<tr><td class="r">11.10<td>-6.58<td>-0.91<td><td><td>
<tr><td class="r">10.30<td>-6.07<td>-0.87<td><td><td>
<tr><td class="r">9.60<td>-5.61<td>-0.84<td><td><td>
<tr><td class="r">9.00<td>-5.21<td>-0.81<td><td><td>
<tr><td class="r">8.40<td>-4.83<td>-0.78<td><td><td>
<tr><td class="r">7.90<td>-4.50<td>-0.75<td><td><td>
<tr><td class="r">7.50<td>-4.22<td>-0.73<td><td><td></table></div>

<div class="w" style="left:13px;top:942px;width:875px;height:60px"><table class="z k" style="width:873px"><colgroup><col style="width:67px"><col style="width:67px"><col style="width:67px"><col style="width:67px"><col style="width:67px"><col style="width:67px"><col style="width:67px"><col style="width:67px"><col style="width:67px"><col style="width:67px"><col style="width:67px"><col style="width:67px"><col style="width:69px"></colgroup>
<tr><th>Analysis<th>Margin<th>Cost<th>Curr Cost<th>Commissi...<th>PnL<th>PnL%<th>Delta<th>Gamma<th>Theta<th>Vega<th>T/D<th>Plot
<tr><td style="text-align:left;padding:0"><span class="p">+</span><span style="color:#0a7adf">Position</span><td>50,000.00<td>42,464.44<td>-35,360...<td>114.10<td class="g">7,104.44<td class="g">14.21%<td>6.84<td>-0.06<td>117.10<td>-346.82<td>17.1<td style="text-align:center;padding:0"><span class="c">✓</span>
<tr><td style="text-align:left;padding:0"><span class="p">+</span><span class="g">Model</span><td>105,363...<td>43,078.04<td>-35,975...<td>115.50<td class="g">7,103.04<td class="g">6.74%<td>10.76<td>-0.08<td>130.53<td>-421.71<td>12.1<td style="text-align:center;padding:0"><span class="c">✓</span></table></div>
</body></html>
